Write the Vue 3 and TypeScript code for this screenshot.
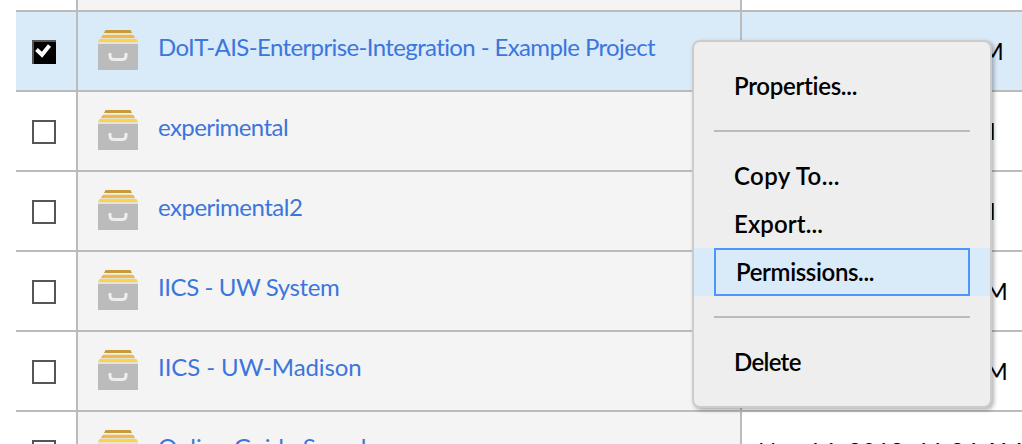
<script setup lang="ts">
interface Row {
  name: string
  spacing: number
  date: string
  dateSpacing: number
  checked?: boolean
}

const rows: Row[] = [
  { name: 'DoIT-AIS-Enterprise-Integration - Example Project', spacing: -0.62, date: 'Nov 14, 2018, 11:21 AM', dateSpacing: -0.74, checked: true },
  { name: 'experimental', spacing: -0.58, date: 'Nov 16, 2018, 1:15 PM', dateSpacing: -0.43 },
  { name: 'experimental2', spacing: -0.5, date: 'Nov 16, 2018, 1:17 PM', dateSpacing: -0.43 },
  { name: 'IICS - UW System', spacing: -0.42, date: 'Nov 14, 2018, 10:40 AM', dateSpacing: -0.55 },
  { name: 'IICS - UW-Madison', spacing: -0.09, date: 'Nov 14, 2018, 10:42 AM', dateSpacing: -0.55 },
  { name: 'Online Guide Sample', spacing: 0, date: 'Nov 14, 2018, 11:24 AM', dateSpacing: 0.15 },
]

const groups = [
  [{ label: 'Properties...', spacing: -0.28 }],
  [
    { label: 'Copy To...', spacing: 0.4 },
    { label: 'Export...', spacing: 0.12 },
    { label: 'Permissions...', spacing: -0.36, active: true },
  ],
  [{ label: 'Delete', spacing: -0.67 }],
]
</script>

<template>
  <main class="view">
    <div class="grid">
      <div class="row stub"><div class="select"></div><div class="project"></div><div class="date"></div></div>
      <div v-for="row in rows" :key="row.name" class="row" :class="{ selected: row.checked }">
        <div class="select">
          <span class="box" :class="{ checked: row.checked }">
            <svg v-if="row.checked" width="22" height="22" viewBox="0 0 22 22">
              <path d="M2.500 7.500 8 12.700 15.500 3.500" fill="none" stroke="#fff" stroke-width="4" />
            </svg>
          </span>
        </div>
        <div class="project">
          <svg class="drawer" width="40" height="40" viewBox="0 0 40 40">
            <path d="M7.500 0h25l1.500 3H6z" fill="#c99a37" />
            <path d="M4.500 5h31l1.500 3H3z" fill="#f0b94b" />
            <path d="M1.500 9h37L40 12H0z" fill="#fcd34a" />
            <path d="M5.500 4h29v1h-29zM2.500 8h35v1h-35zM0 12h40v2H0z" fill="#e8e2d0" />
            <path d="M0 14h40v26H0z" fill="#bbb" />
            <path d="M12 23v2.500q0 4 4 4h8q4 0 4-4V23" fill="none" stroke="#eee" stroke-width="3" />
          </svg>
          <span class="name" :style="{ letterSpacing: row.spacing + 'px' }">{{ row.name }}</span>
        </div>
        <div class="date" :style="{ letterSpacing: row.dateSpacing + 'px' }">{{ row.date }}</div>
      </div>
    </div>
    <nav class="menu">
      <div v-for="(group, i) in groups" :key="i" class="group">
        <div v-for="item in group" :key="item.label" class="item" :class="{ active: 'active' in item }">
          <span class="label" :style="{ letterSpacing: item.spacing + 'px' }">{{ item.label }}</span>
        </div>
      </div>
    </nav>
  </main>
</template>

<style>
body {
  background: #fff;
}
</style>

<style scoped>
.view {
  position: relative;
  width: 1022px;
  height: 444px;
  overflow: hidden;
  background: #fff;
  font-family: Lato, "Liberation Sans", sans-serif;
  font-size: 24px;
  font-variant-ligatures: none;
}
.grid {
  padding-left: 16px;
}
.row {
  box-sizing: border-box;
  display: grid;
  grid-template-columns: 62px 664px 1fr;
  height: 80px;
  border-bottom: 2px solid #bbb;
}
.row.stub {
  height: 12px;
}
.select,
.project {
  box-sizing: border-box;
  border-right: 2px solid #bbb;
}
.select {
  padding: 28px 0 0 16px;
}
.box {
  display: block;
  box-sizing: border-box;
  width: 24px;
  height: 24px;
  border: 2px solid #555;
  background: #fff;
}
.box.checked {
  border-width: 2px 0 0 2px;
  background: #000;
}
.box svg,
.drawer {
  display: block;
}
.project {
  display: flex;
  gap: 20px;
  padding: 18px 0 0 20px;
  background: #f4f4f4;
}
.stub .select,
.stub .project {
  padding: 0;
}
.name {
  color: #3b76dc;
  line-height: 34px;
  white-space: pre;
}
.date {
  min-width: 0;
  padding: 21px 0 0 16px;
  color: #000;
  line-height: 36px;
  white-space: pre;
}
.stub .date {
  padding: 0;
}
.selected,
.selected .project {
  background: #d9eaf9;
}
.menu {
  position: absolute;
  top: 40px;
  left: 692px;
  box-sizing: border-box;
  width: 300px;
  height: 368px;
  padding: 20px 0;
  border: 2px solid #ccc;
  border-radius: 8px;
  background: #eee;
  box-shadow: 2px 2px 4px rgba(0, 0, 0, 0.3);
  font-weight: 600;
}
.group + .group::before {
  content: "";
  display: block;
  height: 2px;
  margin: 20px;
  background: #bbb;
}
.item {
  box-sizing: border-box;
  height: 48px;
  padding: 0 20px;
}
.label {
  display: block;
  box-sizing: border-box;
  height: 48px;
  padding-left: 20px;
  line-height: 48px;
  white-space: pre;
}
.active {
  background: #d9eaf9;
}
.active .label {
  border: 2px solid #4b98f8;
  line-height: 44px;
}
</style>
